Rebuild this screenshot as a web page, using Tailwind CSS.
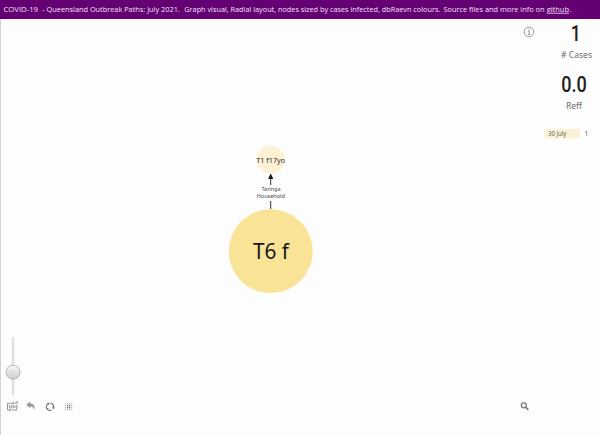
<!DOCTYPE html>
<html lang="en">
<head>
<meta charset="utf-8">
<title>Queensland Outbreak Paths</title>
<script src="https://cdn.jsdelivr.net/npm/@tailwindcss/browser@4"></script>
</head>
<body class="w-[600px] h-[435px] overflow-hidden bg-[#fdfdfd] font-['Noto_Sans',sans-serif] flex flex-col">
<header class="h-[19px] shrink-0 bg-[#640074]">
  <svg class="w-[600px] h-[19px]" viewBox="0 0 600 19" font-family="'Open Sans',sans-serif" font-size="8" fill="#f0e4f3">
    <text x="3.5" y="11.8" textLength="34.5" lengthAdjust="spacingAndGlyphs">COVID-19</text>
    <text x="42.3" y="11.8" textLength="137.5" lengthAdjust="spacingAndGlyphs">- Queensland Outbreak Paths: July 2021.</text>
    <text x="184.3" y="11.8" textLength="256" lengthAdjust="spacingAndGlyphs">Graph visual, Radial layout, nodes sized by cases infected, dbRaevn colours.</text>
    <text x="443.5" y="11.8" textLength="101" lengthAdjust="spacingAndGlyphs">Source files and more info on</text>
    <text x="546.7" y="11.8" textLength="22.3" lengthAdjust="spacingAndGlyphs" class="underline">github</text>
    <text x="569.2" y="11.8">.</text>
  </svg>
</header>
<div class="flex flex-1 border-l border-[#d2d2d2]">
  <main class="w-[543px] flex flex-col">
    <svg class="w-[543px] h-[316px] shrink-0" viewBox="1 19 543 316" font-family="'Noto Sans',sans-serif" text-anchor="middle">
      <circle cx="270.7" cy="159.7" r="14" fill="#fcf1d3"/>
      <circle cx="270.7" cy="251.3" r="42" fill="#f9e397"/>
      <path d="M270.7 209V201M270.7 185V178" stroke="#333" stroke-width="1"/>
      <path d="M270.7 173.5L273.3 179H268.1Z" fill="#111"/>
      <text x="270.7" y="162.6" font-size="7.8" fill="#303030" textLength="29" lengthAdjust="spacingAndGlyphs">T1 f17yo</text>
      <text x="271" y="191.4" font-size="6" fill="#444" textLength="19" lengthAdjust="spacingAndGlyphs">Taringa</text>
      <text x="270.8" y="198.3" font-size="6" fill="#444" textLength="28" lengthAdjust="spacingAndGlyphs">Household</text>
      <text x="271" y="259" font-size="22.5" fill="#161616" textLength="36" lengthAdjust="spacingAndGlyphs">T6 f</text>
      <g fill="none" stroke="#8e8e8e"><circle cx="529" cy="32" r="4.8" stroke-width=".9"/><path d="M528 31H529.2V34.3M527.8 34.5H530.5M529 29V30" stroke-width=".9"/></g>
    </svg>
    <svg class="w-[543px] h-[100px] shrink-0" viewBox="1 335 543 100">
      <defs><linearGradient id="knob" x2="0" y2="1"><stop stop-color="#fafafa"/><stop offset="1" stop-color="#cccccc"/></linearGradient></defs>
      <rect x="11.8" y="337" width="2.5" height="58.5" rx="1" fill="#dfdfdf"/>
      <circle cx="13.1" cy="372.2" r="7" fill="url(#knob)" stroke="#a9a9a9" stroke-width=".8"/>
      <path d="M10 371H16M10 373H16" stroke="#ccc" stroke-width=".7" stroke-dasharray=".8 .8"/>
      <g fill="none" stroke="#8a8a8a" stroke-width=".9">
        <path d="M13.2 403.3H7.5V410H11M12 410H16.8V404.8M12.8 401.7L14.2 403.2L12.8 404.5M14.5 403.5L17.2 401.5V404M10.8 408.4L9.7 410L11 411.4"/>
        <circle cx="12.2" cy="406.7" r="1.3"/><path d="M9.5 405.2V408M14.9 405.2V408"/>
      </g>
      <path d="M26.2 404.8L30.2 401.5V403.5C33.7 403.5 35 405.8 34.3 410C33.5 407.4 32.5 406.5 30.2 406.4V408.3Z" fill="#9b9b9b"/>
      <g fill="none" stroke="#777" stroke-width="1.2"><path d="M47 408.9A3.6 3.6 0 0 1 48.5 403.5M50.6 403.1A3.6 3.6 0 0 1 53.3 408M51.6 410A3.6 3.6 0 0 1 48.3 409.9"/></g>
      <path d="M47.2 402.6L49.8 403L48.5 405.3ZM54.6 406.6L53.9 409.3L51.9 407.7ZM45.9 408.3L48.6 408L47.9 410.5Z" fill="#777"/>
      <path d="M65 403.7H72.5M65 405.7H72.5M65 407.7H72.5M65 409.7H72.5" stroke="#aaa" stroke-width="1.1" stroke-dasharray="1.2 .8"/>
      <path d="M67 405.7H70.5M67 407.7H70.5" stroke="#777" stroke-width="1.2" stroke-dasharray="1.2 .8"/>
      <circle cx="523.8" cy="405.3" r="2.5" fill="none" stroke="#777" stroke-width="1.2"/><path d="M525.6 407.1L528.4 410" stroke="#777" stroke-width="1.6"/>
    </svg>
  </main>
  <aside class="w-[56px] shrink-0">
    <svg class="w-[56px] h-[130px]" viewBox="544 19 56 130" text-anchor="middle" font-family="'Noto Sans',sans-serif">
      <g font-family="Roboto,sans-serif" font-weight="500" fill="#202020">
        <text x="575.8" y="40.8" font-size="22" textLength="10" lengthAdjust="spacingAndGlyphs">1</text>
        <text x="574" y="92" font-size="21.5" textLength="25.5" lengthAdjust="spacingAndGlyphs">0.0</text>
      </g>
      <text x="576.5" y="58" font-size="9.6" fill="#6a6a6a" textLength="31" lengthAdjust="spacingAndGlyphs"># Cases</text>
      <text x="574" y="109.3" font-size="9.6" fill="#6a6a6a" textLength="16" lengthAdjust="spacingAndGlyphs">Reff</text>
      <rect x="544.5" y="129" width="35.5" height="9.5" fill="#fcf1d4"/>
      <text x="557.2" y="136.3" font-size="6.8" fill="#666" textLength="18.5" lengthAdjust="spacingAndGlyphs">30 July</text>
      <text x="586.5" y="136.3" font-size="6.8" fill="#666">1</text>
    </svg>
  </aside>
</div>
</body>
</html>
